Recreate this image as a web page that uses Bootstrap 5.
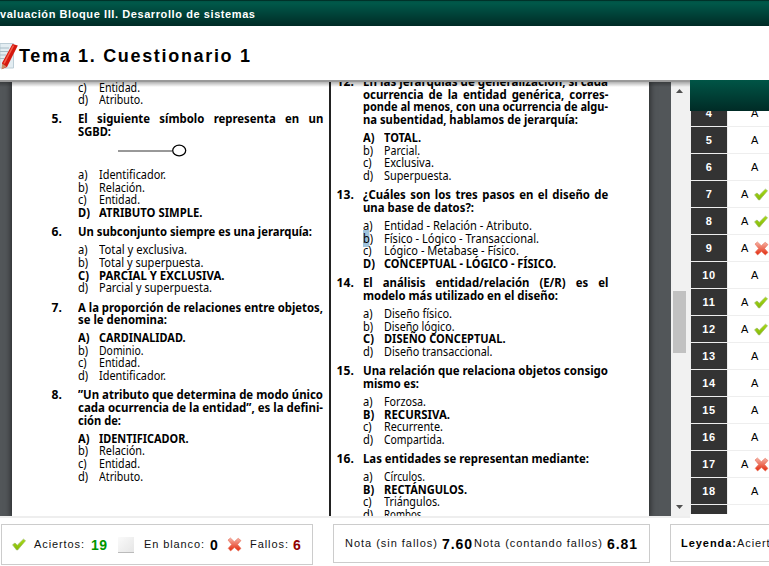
<!DOCTYPE html>
<html lang="es">
<head>
<meta charset="utf-8">
<title>Tema 1. Cuestionario 1</title>
<meta name="viewport" content="width=device-width, initial-scale=1">
<link href="https://cdn.jsdelivr.net/npm/bootstrap@5.3.0/dist/css/bootstrap.min.css" rel="stylesheet">
<style>
body{width:769px;height:566px;overflow:hidden;background:#fff;color:#000;font-family:"Liberation Sans",Arial,sans-serif;font-size:11px;line-height:1}
.topbar{height:26px;background:linear-gradient(#00110e 0,#005345 1px,#00594a 3px,#002b26 100%);color:#fff;font-weight:700;padding-top:2px}
.topbar span{margin-left:-8px}
.titlebar{height:54px;padding-top:6px}
.titlebar h1{font-size:18px;font-weight:700;margin:0 0 0 1px;line-height:1}
.workarea{height:438px}
.viewer{width:690px;height:438px;border-top:2px solid #999;border-bottom:2px solid #eee;background:#525659;position:relative}
.viewer::before{content:"";position:absolute;inset:0 0 auto 0;height:5px;background:linear-gradient(rgba(0,0,0,.3),transparent);z-index:2}
.sheet{margin-left:12px;width:637px;background:#fff;box-shadow:0 0 6px 1px rgba(0,0,0,.55);font-family:"Noto Sans",sans-serif;font-size:12.1px;line-height:12.6px}
.colA{width:319px;padding-left:39.6px;border-right:2px solid #222}
.colB{padding-left:5.6px}
.colA .pages{margin-top:-.5px}
.colB .pages{margin-top:-5.9px}
.quest{display:grid;grid-template-columns:26.6px 246px;font-weight:700;margin-bottom:5.6px}
.opts{padding-left:26.6px;margin-bottom:6.8px}
.opts>div{display:grid;grid-template-columns:20.5px auto;height:12.6px}
.opts>div>span:first-child{transform:scaleX(.92);transform-origin:0 0}
.ln{display:block;white-space:nowrap;height:12.6px;transform-origin:0 0}
.just{width:261px;text-align-last:justify;transform:scaleX(.94)}
.fit{display:block;white-space:nowrap}
.hl{background:#9fc3dc}
.symbol{display:block;margin:4px 0 0 66px}
.symrow{height:30.3px;padding-top:1px}
.scroller{width:19px;background:#f1f1f1}
.thumb{width:13px;height:62px;background:#c1c1c1;margin:195px 0 0 2px}
.answers{width:79px;height:434px;background:#eee}
.anshead{height:31px;background:linear-gradient(#005546,#002b26);position:relative;z-index:1}
.anslist{margin-top:-11px;height:414px;padding-left:1px}
.ansrow{height:26px;margin-bottom:1px;flex:none}
.num{width:36px;background:#333;color:#fff;font-weight:700;letter-spacing:.6px;flex:none}
.ans{width:41px;background:#fff;margin-left:1px;padding-left:13px}
.ans svg{margin-left:6px;flex:none}
.ans.mid{padding-left:23px}
.stat{border:1px solid #ccc;height:39px;color:#111}
.big{font-size:14px;font-weight:700;color:#000}
.ok{color:#009600}.bad{color:#900000}
.blank{width:16px;height:16px;background:linear-gradient(135deg,#fafafa,#e6e6e6);border-bottom:1px solid #bbb}
#foot{margin-top:2px;width:769px;height:46px}
#foot .stat{flex:none}
#foot .tall{width:312px;height:41px;margin-left:1px;padding-left:10px}
.f1{margin-left:8px}.f2{margin-left:7px}.f3{margin-left:11px}.f4{margin-left:10px}.f5{margin-left:6px}.f6{margin-left:9px}.f7{margin-left:8px}.f8{margin-left:5px}
#foot .score{width:317px;margin-left:20px;padding-left:11px}
.g1{margin-left:5px}.g2{margin-left:2px}.g3{margin-left:5px}.g4{margin-left:1px}
#foot .legend-box{width:317px;margin-left:20px;padding-left:10px;height:38px}
</style>
<script src="https://cdn.jsdelivr.net/npm/bootstrap@5.3.0/dist/js/bootstrap.bundle.min.js"></script>
</head>
<body>
<svg width="0" height="0" class="position-absolute">
<defs>
<linearGradient id="g" x1="0" y1="0" x2="0" y2="1"><stop offset="0" stop-color="#a8dc10"/><stop offset="1" stop-color="#84b80c"/></linearGradient>
<linearGradient id="r" x1="0" y1="0" x2="0" y2="1"><stop offset="0" stop-color="#f5b5a8"/><stop offset=".45" stop-color="#ee7460"/><stop offset="1" stop-color="#e22a0c"/></linearGradient>
<symbol id="check" viewBox="0 0 14 13"><path d="M.6 6.8 3 5 5.3 7.2 11.4 1.2 13.5 2.7 5.6 12 4.6 12Z" fill="url(#g)" stroke="#9ab860" stroke-width=".7" stroke-linejoin="round"/></symbol>
<symbol id="cross" viewBox="0 0 15 15"><path d="M1 3 3.4 1 7.3 4.7 11.2 1.3 14 3.6 10.6 7.4 14 11.4 11.3 14 7.4 10.5 3.6 14 1.2 11.3 4.6 7.5Z" fill="url(#r)" stroke="#e8705a" stroke-width=".6" stroke-linejoin="round"/></symbol>
</defs>
</svg>
<header class="topbar d-flex align-items-center"><span class="fit" data-w="263">Evaluación Bloque III. Desarrollo de sistemas</span></header>
<div class="titlebar d-flex align-items-center">
<svg width="18" height="28" viewBox="0 0 18 28"><path d="M0 1.5H13.5V26H0Z" fill="#e3edf2" stroke="#bccdd6"/><path d="M0 6H9M0 9.500H8M0 13H6M0 16.500H4" stroke="#a9bcc6"/><path d="M12.500 2 17.800 3.500 7 25 2 27 2 21Z" fill="#d5180e"/><path d="M13.500 3.500 4 21.500" stroke="#f4604c" stroke-width="1.600"/><path d="M2 21.500 6.500 24.500 1.500 27.500Z" fill="#c98d68"/></svg>
<h1><span class="fit" data-w="231">Tema 1. Cuestionario 1</span></h1>
</div>
<main class="workarea d-flex">
<div class="viewer d-flex overflow-hidden">
<div class="sheet d-flex">
<div class="colA"><div class="pages">
<div class="opts"><div><span>c)</span><span class="ln" data-w="41">Entidad.</span></div><div><span>d)</span><span class="ln" data-w="44">Atributo.</span></div></div>
<div class="quest mb-0"><span>5.</span><div><span class="ln just">El siguiente símbolo representa en un</span><span class="ln" data-w="33">SGBD:</span></div></div>
<div class="symrow"><svg class="symbol" width="70" height="13" viewBox="0 0 70 13"><path d="M0 7H54" stroke="#333"/><ellipse cx="61.2" cy="6.500" rx="6.500" ry="5.300" fill="none" stroke="#000" stroke-width="1.300"/></svg></div>
<div class="opts"><div><span>a)</span><span class="ln" data-w="67">Identificador.</span></div><div><span>b)</span><span class="ln" data-w="46">Relación.</span></div><div><span>c)</span><span class="ln" data-w="41">Entidad.</span></div><div class="fw-bold"><span>D)</span><span class="ln" data-w="103.5">ATRIBUTO SIMPLE.</span></div></div>
<div class="quest"><span>6.</span><span class="ln" data-w="234">Un subconjunto siempre es una jerarquía:</span></div>
<div class="opts"><div><span>a)</span><span class="ln" data-w="88">Total y exclusiva.</span></div><div><span>b)</span><span class="ln" data-w="104.5">Total y superpuesta.</span></div><div class="fw-bold"><span>C)</span><span class="ln" data-w="125.5">PARCIAL Y EXCLUSIVA.</span></div><div><span>d)</span><span class="ln" data-w="113">Parcial y superpuesta.</span></div></div>
<div class="quest"><span>7.</span><div><span class="ln" data-w="245">A la proporción de relaciones entre objetos,</span><span class="ln" data-w="89">se le denomina:</span></div></div>
<div class="opts"><div class="fw-bold"><span>A)</span><span class="ln" data-w="86.5">CARDINALIDAD.</span></div><div><span>b)</span><span class="ln" data-w="44.5">Dominio.</span></div><div><span>c)</span><span class="ln" data-w="41">Entidad.</span></div><div><span>d)</span><span class="ln" data-w="67">Identificador.</span></div></div>
<div class="quest"><span>8.</span><div><span class="ln" data-w="245">”Un atributo que determina de modo único</span><span class="ln" data-w="245">cada ocurrencia de la entidad”, es la defini-</span><span class="ln" data-w="43">ción de:</span></div></div>
<div class="opts"><div class="fw-bold"><span>A)</span><span class="ln" data-w="89.5">IDENTIFICADOR.</span></div><div><span>b)</span><span class="ln" data-w="46">Relación.</span></div><div><span>c)</span><span class="ln" data-w="41">Entidad.</span></div><div><span>d)</span><span class="ln" data-w="44">Atributo.</span></div></div>
</div></div>
<div class="colB"><div class="pages">
<div class="quest"><span>12.</span><div><span class="ln" data-w="245">En las jerarquías de generalización, si cada</span><span class="ln just">ocurrencia de la entidad genérica, corres-</span><span class="ln" data-w="245">ponde al menos, con una ocurrencia de algu-</span><span class="ln" data-w="215">na subentidad, hablamos de jerarquía:</span></div></div>
<div class="opts"><div class="fw-bold"><span>A)</span><span class="ln" data-w="37">TOTAL.</span></div><div><span>b)</span><span class="ln" data-w="36">Parcial.</span></div><div><span>c)</span><span class="ln" data-w="50">Exclusiva.</span></div><div><span>d)</span><span class="ln" data-w="67.5">Superpuesta.</span></div></div>
<div class="quest"><span>13.</span><div><span class="ln just">¿Cuáles son los tres pasos en el diseño de</span><span class="ln" data-w="111">una base de datos?:</span></div></div>
<div class="opts"><div><span>a)</span><span class="ln" data-w="148">Entidad - Relación - Atributo.</span></div><div><span><span class="hl">b</span>)</span><span class="ln" data-w="155">Físico - Lógico - Transaccional.</span></div><div><span>c)</span><span class="ln" data-w="135">Lógico - Metabase - Físico.</span></div><div class="fw-bold"><span>D)</span><span class="ln" data-w="172">CONCEPTUAL - LÓGICO - FÍSICO.</span></div></div>
<div class="quest"><span>14.</span><div><span class="ln just">El análisis entidad/relación (E/R) es el</span><span class="ln" data-w="195">modelo más utilizado en el diseño:</span></div></div>
<div class="opts"><div><span>a)</span><span class="ln" data-w="68">Diseño físico.</span></div><div><span>b)</span><span class="ln" data-w="70.5">Diseño lógico.</span></div><div class="fw-bold"><span>C)</span><span class="ln" data-w="121.5">DISEÑO CONCEPTUAL.</span></div><div><span>d)</span><span class="ln" data-w="108.5">Diseño transaccional.</span></div></div>
<div class="quest"><span>15.</span><div><span class="ln" data-w="245">Una relación que relaciona objetos consigo</span><span class="ln" data-w="56">mismo es:</span></div></div>
<div class="opts"><div><span>a)</span><span class="ln" data-w="42">Forzosa.</span></div><div class="fw-bold"><span>B)</span><span class="ln" data-w="66">RECURSIVA.</span></div><div><span>c)</span><span class="ln" data-w="59">Recurrente.</span></div><div><span>d)</span><span class="ln" data-w="60.5">Compartida.</span></div></div>
<div class="quest"><span>16.</span><span class="ln" data-w="226">Las entidades se representan mediante:</span></div>
<div class="opts"><div><span>a)</span><span class="ln" data-w="41">Círculos.</span></div><div class="fw-bold"><span>B)</span><span class="ln" data-w="83">RECTÁNGULOS.</span></div><div><span>c)</span><span class="ln" data-w="56">Triángulos.</span></div><div><span>d)</span><span class="ln" data-w="40">Rombos.</span></div></div>
</div></div>
</div>
<div class="scroller ms-auto d-flex flex-column">
<svg width="17" height="14" class="flex-shrink-0"><path d="M5 11 8.500 7 12 11Z" fill="#505050"/></svg>
<div class="thumb flex-shrink-0"></div>
<svg width="17" height="14" class="mt-auto"><path d="M5 3H12L8.500 7Z" fill="#505050"/></svg>
</div>
</div>
<aside class="answers overflow-hidden">
<div class="anshead"></div>
<div class="anslist d-flex flex-column overflow-hidden" id="list"></div>
</aside>
</main>
<footer class="d-flex align-items-start pt-1 overflow-hidden" id="foot">
<div class="stat tall d-flex align-items-center">
<svg width="14" height="13"><use href="#check"/></svg><span class="fit f1" data-w="50">Aciertos:</span><span class="fit big ok f2" data-w="16">19</span><span class="blank f3"></span><span class="fit f4" data-w="60">En blanco:</span><span class="fit big f5" data-w="8">0</span><svg class="f6" width="15" height="15"><use href="#cross"/></svg><span class="fit f7" data-w="38">Fallos:</span><span class="fit big bad f8" data-w="8">6</span>
</div>
<div class="stat score d-flex align-items-center">
<span class="fit" data-w="92">Nota (sin fallos)</span><span class="fit big g1" data-w="30">7.60</span><span class="fit g2" data-w="128">Nota (contando fallos)</span><span class="fit big g3" data-w="30">6.81</span>
</div>
<div class="stat legend-box d-flex align-items-center">
<span class="fit fw-bold text-black" data-w="55">Leyenda:</span><span class="fit g4" data-w="50">Aciertos:</span>
</div>
</footer>
<script>
const marks={7:'check',8:'check',9:'cross',11:'check',12:'check',17:'cross'};
let rows='';
for(let n=4;n<20;n++){
  const m=marks[n];
  const icon=m?`<svg width="${m=='check'?14:15}" height="${m=='check'?13:15}"><use href="#${m}"/></svg>`:'';
  rows+=`<div class="ansrow d-flex"><div class="num d-flex align-items-center justify-content-center">${n<19?n:''}</div><div class="ans ${m?'':'mid '}d-flex align-items-center">${n<19?'A'+icon:''}</div></div>`;
}
document.getElementById('list').innerHTML=rows;
// Fit each line to its measured width: condensed glyphs on the sheet, tracked letters elsewhere
document.querySelectorAll('[data-w]').forEach(e=>{
  const w=+e.dataset.w,r=document.createRange();
  r.selectNodeContents(e);
  const nat=r.getBoundingClientRect().width,n=e.textContent.length;
  e.style.width=w+'px';
  if(e.classList.contains('ln')){e.style.width=nat+'px';e.style.transform='scaleX('+w/nat+')';}
  else if(n>1)e.style.letterSpacing=((w-nat)/(n-1))+'px';
});
</script>
</body>
</html>
